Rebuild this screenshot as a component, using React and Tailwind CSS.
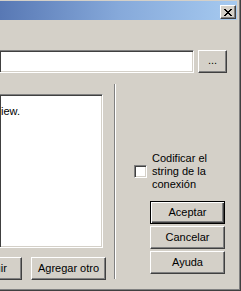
import React from 'react';

// Win2000-style bevels
const raised =
  'border border-t-white border-l-white border-r-[#404040] border-b-[#404040] shadow-[inset_-1px_-1px_0_#808080]';
const sunken =
  'border border-t-[#808080] border-l-[#808080] border-r-white border-b-white shadow-[inset_1px_1px_0_#404040,inset_-1px_-1px_0_#d4d0c8]';

const Button = ({ children, isDefault, className = '' }) => (
  <div
    className={`w-[75px] h-[23px] flex items-center justify-center shrink-0 bg-[#d4d0c8] ${
      isDefault
        ? 'border border-black shadow-[inset_1px_1px_0_#fff,inset_-1px_-1px_0_#404040,inset_-2px_-2px_0_#808080]'
        : raised
    } ${className}`}
  >
    {children}
  </div>
);

const CloseGlyph = () => (
  <svg width="8" height="7" viewBox="0 0 8 7" shapeRendering="crispEdges">
    <path d="M0 0h2v1H0zM6 0h2v1H6zM1 1h2v1H1zM5 1h2v1H5zM2 2h4v1H2zM3 3h2v1H3zM2 4h4v1H2zM1 5h2v1H1zM5 5h2v1H5zM0 6h2v1H0zM6 6h2v1H6z" fill="#000" />
  </svg>
);

export default function App() {
  return (
    <div className="w-[241px] h-[291px] overflow-hidden bg-[#d4d0c8] border-r border-b border-r-[#404040] border-b-[#404040] font-['Liberation_Sans',Arial,sans-serif] text-[11px] leading-[13px] text-black select-none">
      <div className="h-full border-r border-b border-r-[#808080] border-b-[#808080] pt-px pr-[2px]">
        {/* title bar */}
        <div className="h-[19px] bg-linear-to-r from-[#5878b4] via-[#86a9da] to-[#a6caf0] flex justify-end pt-[4px] pr-px">
          <div className={`w-[16px] h-[14px] bg-[#d4d0c8] flex items-center justify-center ${raised}`}>
            <CloseGlyph />
          </div>
        </div>

        {/* connection string row */}
        <div className="flex items-start gap-[4px] mt-[30px]">
          <div className={`w-[194px] h-[23px] bg-white border-l-0 ${sunken}`} />
          <div className={`w-[29px] h-[23px] flex items-center justify-center pb-[2px] ${raised}`}>
            ...
          </div>
        </div>

        <div className="flex mt-[11px]">
          {/* left column */}
          <div className="w-[114px] shrink-0 flex flex-col">
            <div className={`w-[103px] h-[154px] mt-[10px] bg-white border-l-0 pt-[10px] pl-px ${sunken}`}>
              iew.
            </div>
            <div className="flex gap-[9px] mt-[9px] ml-[-53px]">
              <Button>Construir</Button>
              <Button>Agregar otro</Button>
            </div>
          </div>

          {/* separator */}
          <div className="w-[2px] h-[195px] shrink-0 border-l border-l-[#808080] border-r border-r-white" />

          {/* right column */}
          <div className="flex flex-col">
            <div className="flex items-center gap-[5px] mt-[68px] pl-[18px]">
              <div className={`w-[13px] h-[13px] bg-white shrink-0 ${sunken}`} />
              <div>
                Codificar el
                <br />
                string de la
                <br />
                conexión
              </div>
            </div>
            <div className="flex flex-col gap-[2px] mt-[10px] ml-[34px]">
              <Button isDefault>Aceptar</Button>
              <Button>Cancelar</Button>
              <Button>Ayuda</Button>
            </div>
          </div>
        </div>
      </div>
    </div>
  );
}
